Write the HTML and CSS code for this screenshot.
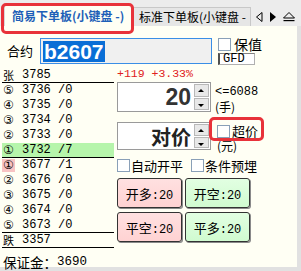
FILE: index.html
```html
<!DOCTYPE html>
<html>
<head>
<meta charset="utf-8">
<link rel="stylesheet" href="styles.css">
</head>
<body>
<div class="win">
  <div class="tabs">
    <div class="tab active">简易下单板(小键盘 -)</div>
    <div class="tab">标准下单板(小键盘 -</div>
    <div class="navs">
      <svg width="10" height="12" viewBox="0 0 10 12"><path d="M8 1.5 L2.5 6 L8 10.5 Z" fill="none" stroke="#000" stroke-width="1"/></svg>
      <svg width="10" height="12" viewBox="0 0 10 12"><path d="M2 1 L8 6 L2 11 Z" fill="#000"/></svg>
      <svg width="14" height="12" viewBox="0 0 14 12"><path d="M7 1.5 L12.5 7 L1.5 7 Z" fill="none" stroke="#000" stroke-width="1"/><rect x="1.5" y="9" width="11" height="1.2" fill="#000"/></svg>
    </div>
    <div class="hl hl-tab"></div>
  </div>
  <div class="panel">
    <div class="top">
      <span class="lbl">合约</span>
      <div class="code"><span class="sel">b2607</span></div>
      <div class="opts">
        <div class="chk big"><span class="box"></span><span>保值</span></div>
        <div class="gfd">GFD</div>
      </div>
    </div>
    <div class="main">
      <div class="book">
        <div class="row line"><span class="cn">张</span><span class="num">3785</span></div>
        <div class="row"><span class="cir">⑤</span><span class="num">3736 /0</span></div>
        <div class="row"><span class="cir">④</span><span class="num">3735 /0</span></div>
        <div class="row"><span class="cir">③</span><span class="num">3734 /0</span></div>
        <div class="row"><span class="cir">②</span><span class="num">3733 /0</span></div>
        <div class="row line ask1"><span class="cir">①</span><span class="num">3732 /7</span></div>
        <div class="row"><span class="cir bid1">①</span><span class="num">3677 /1</span></div>
        <div class="row"><span class="cir">②</span><span class="num">3676 /0</span></div>
        <div class="row"><span class="cir">③</span><span class="num">3675 /0</span></div>
        <div class="row"><span class="cir">④</span><span class="num">3674 /0</span></div>
        <div class="row line"><span class="cir">⑤</span><span class="num">3673 /0</span></div>
        <div class="row line"><span class="cn">跌</span><span class="num">3357</span></div>
        <div class="row margin"><span class="cn">保证金：</span><span class="num">3690</span></div>
      </div>
      <div class="ctrl">
        <div class="chg">+119 +3.33%</div>
        <div class="line-qty">
          <div class="spin"><span class="val">20</span><div class="btns"><span class="up"></span><span class="dn"></span></div></div>
          <div class="hint"><div class="lim">&lt;=6088</div><div class="cnh">(手)</div></div>
        </div>
        <div class="line-price">
          <div class="spin price"><span class="val cnv">对价</span><div class="btns"><span class="up"></span><span class="dn"></span></div></div>
          <div class="hint">
            <div class="chk over"><span class="box"></span><span>超价</span></div>
            <div class="cnh">(元)</div>
          </div>
          <div class="hl hl-over"></div>
        </div>
        <div class="checks">
          <div class="chk"><span class="box"></span><span>自动开平</span></div>
          <div class="chk"><span class="box"></span><span>条件预埋</span></div>
        </div>
        <div class="orders">
          <button class="ob buy">开多<span class="m">:20</span></button>
          <button class="ob sell">开空<span class="m">:20</span></button>
          <button class="ob buy">平空<span class="m">:20</span></button>
          <button class="ob sell">平多<span class="m">:20</span></button>
        </div>
      </div>
    </div>
  </div>
</div>
</body>
</html>
```
FILE: styles.css
```css
* { box-sizing: border-box; }
body { margin: 0; background: #e1e1e1; font-family: "Noto Sans CJK SC", sans-serif; font-size: 12px; color: #000; }
.win { width: 301px; height: 271px; position: relative; background: #e1e1e1; }
.tabs { height: 26px; display: flex; align-items: flex-end; padding-left: 4px; background: #ececec; position: relative; }
.tab { height: 19px; line-height: 18px; padding: 0 0 0 5px; background: #e6e6e6; border: 1px solid #c8c8c8; border-bottom: none; white-space: nowrap; overflow: hidden; width: 118px; font-size: 12px; }
.tab.active { width: 129px; height: 21px; line-height: 20px; background: #fffff4; color: #1d5fb8; font-weight: bold; padding-left: 7px; border-color: #d8d8d8; }
.navs { display: flex; align-items: center; gap: 4px; height: 19px; padding-left: 3px; }
.hl { position: absolute; border: 3px solid #e8323a; border-radius: 5px; }
.hl-tab { left: 1px; top: 3px; width: 133px; height: 31px; }
.panel { width: 297px; height: 241px; background: #fffff4; }
.top { height: 42px; display: flex; align-items: flex-start; padding-top: 12px; }
.lbl { width: 40px; padding-left: 7px; line-height: 26px; font-size: 13px; }
.code { width: 172px; height: 26px; border: 1px solid #3a8ee6; background: #f0f0f0; padding: 2px 0 0 2px; }
.sel { display: inline-block; background: #0a6ed6; color: #fff; font-family: "Liberation Sans", Arial, sans-serif; font-weight: bold; font-size: 21px; line-height: 21px; height: 21px; padding: 0 1px; }
.opts { margin-left: 6px; display: flex; flex-direction: column; gap: 2px; }
.chk { display: flex; align-items: center; gap: 2px; line-height: 13px; white-space: nowrap; }
.box { width: 13px; height: 13px; border: 1px solid #8aa0b8; background: #fff; flex: none; }
.chk.big { font-size: 14px; gap: 3px; }
.gfd { width: 37px; height: 12px; border: 1px solid #b0b0b0; border-left: 2px solid #505050; border-top-color: #808080; background: #fff; font-family: "Liberation Mono", monospace; font-size: 12px; line-height: 10px; padding-left: 3px; }
.main { display: flex; }
.book { width: 114px; padding-left: 2px; }
.row { height: 15px; line-height: 14px; display: flex; align-items: center; white-space: nowrap; }
.row.line { border-bottom: 1px solid #000; }
.cn { font-size: 11px; width: 20px; padding-left: 1px; line-height: 13px; }
.cir { font-family: "DejaVu Sans", "Noto Sans CJK SC", sans-serif; font-size: 12px; width: 13px; margin-right: 7px; text-align: center; line-height: 13px; }
.num { font-family: "Liberation Mono", monospace; font-size: 12px; line-height: 13px; }
.ask1 { background: #b6f5ab; }
.bid1 { background: #f8c3c3; }
.margin { margin-top: 6px; height: 16px; }
.margin .cn { width: auto; font-size: 13.5px; line-height: 16px; }
.margin .num { font-size: 12.5px; }
.ctrl { padding-left: 3px; position: relative; }
.chg { color: #e02020; font-family: "Liberation Mono", monospace; font-size: 11.5px; height: 13px; line-height: 11px; }
.line-qty, .line-price { display: flex; position: relative; }
.spin { width: 94px; height: 30px; border: 1px solid #9a9a9a; background: #fff; display: flex; align-items: center; justify-content: flex-end; padding: 1px; }
.spin .val { flex: 1; text-align: right; padding-right: 3px; font-family: "Liberation Sans", Arial, sans-serif; font-weight: bold; font-size: 23px; color: #333; }
.spin .cnv { font-family: "Noto Sans CJK SC", sans-serif; font-size: 20px; color: #222; }
.btns { width: 15px; height: 100%; display: flex; flex-direction: column; gap: 1px; }
.btns span { flex: 1; background: #e8e8e8; border: 1px solid #b8b8b8; position: relative; }
.btns span::after { content: ""; position: absolute; left: 3px; top: 4px; border-left: 3px solid transparent; border-right: 3px solid transparent; }
.btns .up::after { border-bottom: 3px solid #000; }
.btns .dn::after { border-top: 3px solid #000; top: 5px; }
.hint { padding-left: 4px; padding-top: 4px; }
.lim { font-family: "Liberation Mono", monospace; font-size: 12px; line-height: 13px; height: 13px; }
.cnh { font-family: "Noto Sans CJK SC", sans-serif; font-size: 12px; line-height: 13px; height: 13px; margin-top: 1px; }
.line-qty { margin-top: 1px; }
.line-price { margin-top: 9px; height: 28px; }
.line-price .spin { height: 28px; }
.line-price .hint { padding-top: 2px; padding-left: 6px; }
.over { font-family: "Noto Sans CJK SC", sans-serif; font-size: 13px; line-height: 14px; height: 14px; gap: 2px; }
.hl-over { left: 92px; top: -5px; width: 55px; height: 24px; }
.checks { display: flex; gap: 8px; margin-top: 9px; font-size: 13px; }
.checks .chk { gap: 1px; }
.checks .chk:first-child { width: 66px; }
.orders { display: grid; grid-template-columns: 65px 65px; gap: 4px 3px; margin-top: 6px; }
.ob { height: 30px; border: 1px solid #333; border-radius: 3px; font-family: "Noto Sans CJK SC", sans-serif; font-size: 13px; padding: 0; box-shadow: 1px 1px 0 #8a8a8a; color: #000; }
.ob .m { font-family: "Liberation Mono", monospace; font-size: 12px; }
.ob.buy { background: linear-gradient(#ffe0e0, #ffd2d2); }
.ob.sell { background: linear-gradient(#e2ffe2, #d0fbd0); }
```
